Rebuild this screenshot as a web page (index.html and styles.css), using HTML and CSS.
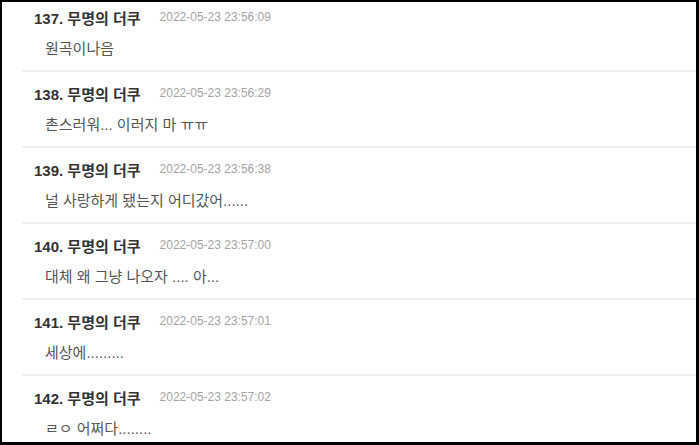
FILE: index.html
```html
<!DOCTYPE html>
<html lang="ko">
<head>
  <meta charset="UTF-8">
  <meta name="viewport" content="width=device-width, initial-scale=1.0">
  <title>댓글</title>
  <link rel="stylesheet" href="styles.css">
</head>
<body>
  <div class="frame">
    <ul class="comments">
      <li class="comment">
        <div class="comment-head"><span class="author">137. 무명의 더쿠</span><span class="date">2022-05-23 23:56:09</span></div>
        <div class="comment-body">원곡이나음</div>
      </li>
      <li class="comment">
        <div class="comment-head"><span class="author">138. 무명의 더쿠</span><span class="date">2022-05-23 23:56:29</span></div>
        <div class="comment-body">촌스러워... 이러지 마 ㅠㅠ</div>
      </li>
      <li class="comment">
        <div class="comment-head"><span class="author">139. 무명의 더쿠</span><span class="date">2022-05-23 23:56:38</span></div>
        <div class="comment-body">널 사랑하게 됐는지 어디갔어......</div>
      </li>
      <li class="comment">
        <div class="comment-head"><span class="author">140. 무명의 더쿠</span><span class="date">2022-05-23 23:57:00</span></div>
        <div class="comment-body">대체 왜 그냥 나오자 .... 아...</div>
      </li>
      <li class="comment">
        <div class="comment-head"><span class="author">141. 무명의 더쿠</span><span class="date">2022-05-23 23:57:01</span></div>
        <div class="comment-body">세상에.........</div>
      </li>
      <li class="comment">
        <div class="comment-head"><span class="author">142. 무명의 더쿠</span><span class="date">2022-05-23 23:57:02</span></div>
        <div class="comment-body">ㄹㅇ 어쩌다........</div>
      </li>
    </ul>
  </div>
</body>
</html>
```

FILE: styles.css
```css
html, body {
  margin: 0;
  padding: 0;
  background: #fff;
}
body {
  font-family: "Liberation Sans", "Noto Sans CJK KR", sans-serif;
}
.frame {
  box-sizing: border-box;
  height: 445px;
  border: solid #000;
  border-width: 2px 3px 3px 2px;
  overflow: hidden;
}
.comments {
  list-style: none;
  margin: -6px 0 0 20px;
  padding: 0;
}
.comment {
  padding: 11px 0;
  border-bottom: 2px solid #efefef;
}
.comment-head {
  display: flex;
  align-items: center;
  gap: 19px;
  height: 20px;
  padding-left: 12px;
}
.author {
  font-size: 15px;
  font-weight: bold;
  color: #333;
}
.date {
  font-size: 12px;
  color: #a3a3a3;
}
.comment-body {
  margin-top: 12px;
  height: 20px;
  line-height: 20px;
  padding-left: 23px;
  font-size: 15px;
  color: #555;
}
```
